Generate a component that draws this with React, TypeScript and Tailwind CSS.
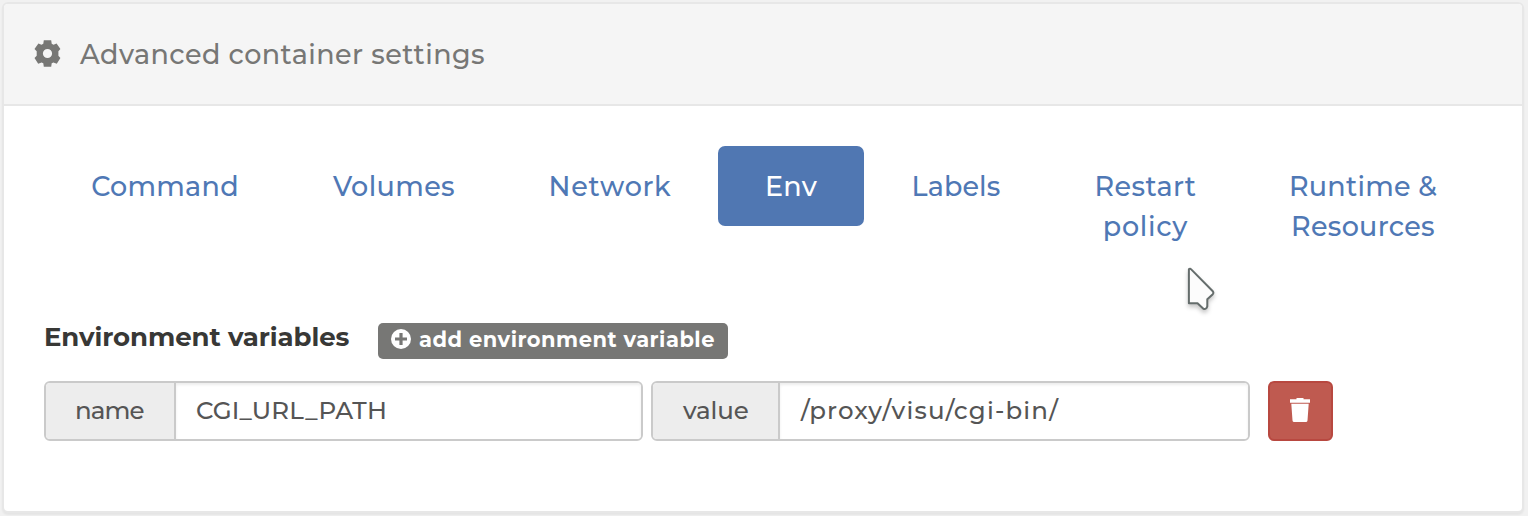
import type { ReactNode } from "react";

type Tab = { lines: string[]; width: string; spacing: string[]; active?: boolean };

const tabs: Tab[] = [
  { lines: ["Command"], width: "w-[242px]", spacing: ["tracking-[0.250px]"] },
  { lines: ["Volumes"], width: "w-[216px]", spacing: ["tracking-[0.400px]"] },
  { lines: ["Network"], width: "w-[216px]", spacing: ["tracking-[0.700px]"] },
  { lines: ["Env"], width: "w-[146px]", spacing: ["tracking-[0.200px]"], active: true },
  { lines: ["Labels"], width: "w-[184px]", spacing: ["tracking-[0.100px]"] },
  { lines: ["Restart", "policy"], width: "w-[195px]", spacing: ["tracking-[0.400px]", "tracking-[0.700px]"] },
  { lines: ["Runtime &", "Resources"], width: "w-[240px]", spacing: ["tracking-[0.250px]", "tracking-[0.300px]"] },
];

function GearIcon() {
  return (
    <svg className="mb-[2px] h-[27px] w-[27px] shrink-0" viewBox="0 0 27 27" fill="#777775">
      <path
        fillRule="evenodd"
        d="M9.800 0.300h7.400l.5 3.500 1.800.9 3.100-1.300 3.800 5.600-2 2.200v4.600l2 2.200-3.600 5.800-3.400-1.300-1.700.8-.5 3.500h-7.400l-.5-3.500-1.700-.8-3.400 1.300L.5 18l2.200-2.200v-4.600L.5 9l3.900-5.600 3.100 1.300 1.800-.9zM13.500 8.900a4.600 4.600 0 1 0 0 9.200a4.600 4.600 0 1 0 0-9.200z"
      />
    </svg>
  );
}

function PlusCircleIcon() {
  return (
    <svg className="h-[20px] w-[20px] shrink-0" viewBox="0 0 20 20">
      <circle cx="10" cy="10" r="10" fill="#fff" />
      <path d="M8.400 4h3.200v4.400H16v3.200h-4.400V16H8.400v-4.400H4V8.400h4.400z" fill="#777775" />
    </svg>
  );
}

function TrashIcon() {
  return (
    <svg className="mb-[2px] mr-[1px] h-[24px] w-[22px]" viewBox="0 0 22 24" fill="#fff">
      <path d="M7.500 0h7v1.300h6.500V4.700H1V1.300h6.500zM2.300 5.800h17.400l-1.200 16.700q-.1 1.500-1.700 1.500H5.200q-1.600 0-1.700-1.500z" />
    </svg>
  );
}

function Cursor() {
  return (
    <svg className="pointer-events-none absolute left-[1180px] top-[262px] h-[56px] w-[42px] drop-shadow-[0_3px_2px_rgba(0,0,0,0.22)]" viewBox="0 0 42 56">
      <path
        d="M8.900 7.200Q10 6.100 11.200 7.400L32.800 29.300Q33.900 30.900 32.800 32.200L27.300 37.300V44.200Q26.600 47.600 23.400 46.700L17.500 41.200H8.900z"
        fill="#fcfcfc"
        stroke="#656d6c"
        strokeWidth="2"
        strokeLinejoin="round"
      />
    </svg>
  );
}

function Field({ label, labelClass, children }: { label: string; labelClass: string; children: ReactNode }) {
  return (
    <div className="flex h-[60px] w-[599px] overflow-hidden rounded-[6px] border-2 border-[#cacaca] text-[24.500px] leading-[54px] text-[#555]">
      <div className={"shrink-0 border-r-2 border-[#cacaca] bg-[#ededed] " + labelClass}>{label}</div>
      <div className="flex-1 bg-white shadow-[inset_0_2px_3px_rgba(0,0,0,0.075)]">{children}</div>
    </div>
  );
}

export default function App() {
  return (
    <div className="relative h-[516px] w-[1528px] overflow-hidden bg-[#f1f1f1] p-[2px] font-['Montserrat','Inter',sans-serif] font-medium">
      <section className="h-[511px] w-[1522px] rounded-[6px] border-2 border-[#e7e7e7] bg-white shadow-[0_2px_2px_rgba(0,0,0,0.05)]">
        <header className="flex h-[102px] items-center rounded-t-[4px] border-b-2 border-[#e7e7e7] bg-[#f5f5f5] pl-[30px]">
          <GearIcon />
          <h1 className="ml-[19px] whitespace-nowrap pt-[2px] text-[27px] leading-[40px] tracking-[0.450px] text-[#777775]">Advanced container settings</h1>
        </header>
        <div className="px-[40px] pt-[40px]">
          <nav className="flex items-start">
            {tabs.map((tab) => (
              <a
                key={tab.lines[0]}
                className={
                  "flex shrink-0 flex-col items-center whitespace-nowrap rounded-[7px] pb-[19px] pt-[21px] text-[27px] leading-[40px] " +
                  tab.width +
                  (tab.active ? " bg-[#5077b2] text-white" : " text-[#4f78b5]")
                }
              >
                {tab.lines.map((line, i) => (
                  <span key={line} className={tab.spacing[i]}>
                    {line}
                  </span>
                ))}
              </a>
            ))}
          </nav>
          <div className="mt-[57px] flex h-[36px] items-center">
            <h2 className="w-[334px] shrink-0 whitespace-nowrap pb-[8px] text-[26px] font-bold leading-[36px] tracking-[-0.080px] text-[#383836]">
              Environment variables
            </h2>
            <button className="flex h-[36px] w-[350px] shrink-0 items-center whitespace-nowrap rounded-[5px] bg-[#777775] pb-[4px] pl-[13px] text-[21px] font-bold leading-[32px] tracking-[0.500px] text-white">
              <PlusCircleIcon />
              <span className="ml-[8px] pt-[2px]">add environment variable</span>
            </button>
          </div>
          <div className="mt-[22px] flex whitespace-nowrap">
            <Field label="name" labelClass="w-[130px] pl-[29px] tracking-[-0.900px]">
              <span className="pl-[20px] tracking-[0.140px]">CGI_URL_PATH</span>
            </Field>
            <div className="w-[8px]" />
            <Field label="value" labelClass="w-[127px] pl-[30px] tracking-[-0.100px]">
              <span className="pl-[21px] tracking-[1.180px]">/proxy/visu/cgi-bin/</span>
            </Field>
            <button className="ml-[18px] flex h-[60px] w-[65px] items-center justify-center rounded-[6px] border-2 border-[#b84840] bg-[#bf5a50]">
              <TrashIcon />
            </button>
          </div>
        </div>
      </section>
      <Cursor />
    </div>
  );
}
